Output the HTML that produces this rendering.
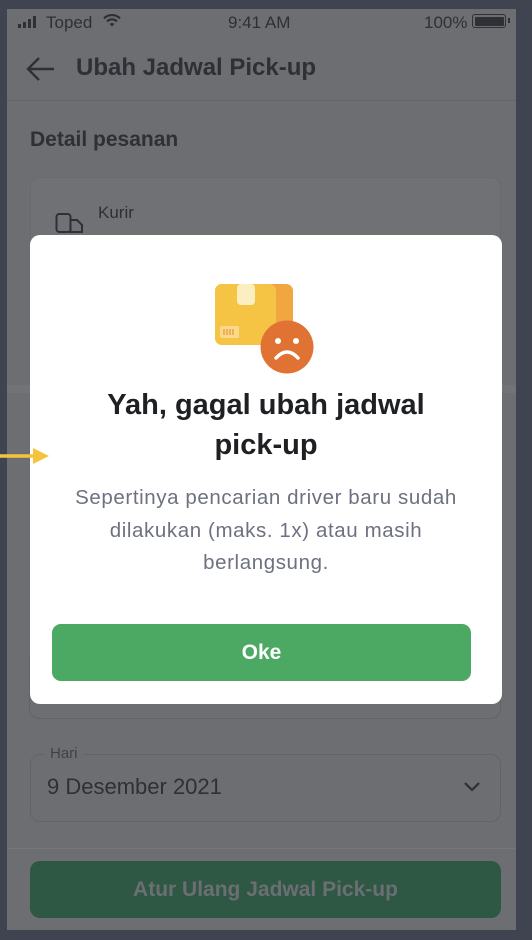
<!DOCTYPE html>
<html><head><meta charset="utf-8"><style>
*{margin:0;padding:0;box-sizing:border-box}
body{width:532px;height:940px;background:#3f4450;position:relative;overflow:hidden;font-family:"Liberation Sans",sans-serif}
.scr{position:absolute;left:7px;top:9px;width:509px;height:921px;background:#6d6e72;overflow:hidden}
.abs{position:absolute}
.t{color:#2e3036}
</style></head><body>
<div class="scr">
  <svg class="abs" style="left:11px;top:7px" width="22" height="12"><rect x="0" y="8" width="3" height="4" fill="#2e3036"/><rect x="5" y="6" width="3" height="6" fill="#2e3036"/><rect x="10" y="3" width="3" height="9" fill="#2e3036"/><rect x="15" y="0" width="3" height="12" fill="#2e3036"/></svg>
  <div class="abs t" style="left:39px;top:4px;font-size:17px">Toped</div>
  <svg class="abs" style="left:96px;top:5px" width="18" height="13" viewBox="0 0 18 13"><path d="M1 4.5A11 11 0 0 1 17 4.5" stroke="#2e3036" stroke-width="2.2" fill="none"/><path d="M4 7.5A7 7 0 0 1 14 7.5" stroke="#2e3036" stroke-width="2.2" fill="none"/><path d="M9 12.5L6.5 10A3.5 3.5 0 0 1 11.5 10Z" fill="#2e3036"/></svg>
  <div class="abs t" style="left:221px;top:4px;font-size:17px">9:41 AM</div>
  <div class="abs t" style="left:417px;top:4px;font-size:17px">100%</div>
  <div class="abs" style="left:465px;top:5px;width:34px;height:14px;border:1.5px solid #2e3036;border-radius:3px;padding:1.5px"><div style="width:100%;height:100%;background:#2e3036;border-radius:1px"></div></div>
  <div class="abs" style="left:501px;top:9px;width:2px;height:5px;background:#2e3036"></div>
  <svg class="abs" style="left:19px;top:47px" width="30" height="26"><path d="M28 13H3M13 2L2 13L13 24" stroke="#2e3036" stroke-width="2.4" fill="none"/></svg>
  <div class="abs t" style="left:69px;top:45px;font-size:24px;font-weight:bold">Ubah Jadwal Pick-up</div>
  <div class="abs" style="left:0;top:91px;width:509px;height:1px;background:#5f646e"></div>
  <div class="abs t" style="left:23px;top:119px;font-size:21px;font-weight:bold">Detail pesanan</div>
  <div class="abs" style="left:23px;top:168px;width:471px;height:220px;border:1px solid #666a72;border-radius:10px;background:#707175"></div>
  <svg class="abs" style="left:48px;top:203px" width="30" height="24"><rect x="1.5" y="2" width="14" height="18" rx="3" stroke="#2e3036" stroke-width="2" fill="none"/><path d="M15.5 8H22L27 13V20H15.5Z" stroke="#2e3036" stroke-width="2" fill="none"/></svg>
  <div class="abs t" style="left:91px;top:194px;font-size:17px">Kurir</div>
  <div class="abs" style="left:0;top:376px;width:509px;height:8px;background:#727377"></div>
  <div class="abs" style="left:22px;top:640px;width:472px;height:70px;border:1px solid #5f636c;border-radius:10px"></div>
  <div class="abs" style="left:23px;top:745px;width:471px;height:68px;border:1px solid #5f636c;border-radius:10px"></div>
  <div class="abs" style="left:38px;top:736px;background:#6d6e72;padding:0 5px;color:#3f424a;font-size:15px">Hari</div>
  <div class="abs t" style="left:40px;top:765px;font-size:22px">9 Desember 2021</div>
  <svg class="abs" style="left:456px;top:772px" width="18" height="12"><path d="M2 2L9 9L16 2" stroke="#2e3036" stroke-width="2.2" fill="none"/></svg>
  <div class="abs" style="left:0;top:839px;width:509px;height:1px;background:#75767a"></div>
  <div class="abs" style="left:23px;top:852px;width:471px;height:57px;background:#2e5744;border-radius:10px;color:#6b6f73;font-size:21px;font-weight:bold;text-align:center;line-height:57px">Atur Ulang Jadwal Pick-up</div>
</div>
<div class="abs" style="left:30px;top:235px;width:472px;height:469px;background:#fff;border-radius:10px"></div>
<svg class="abs" style="left:212px;top:280px" width="112" height="100">
  <rect x="3" y="4" width="78" height="61" rx="7" fill="#f2a640"/>
  <rect x="3" y="4" width="61" height="61" rx="7" fill="#f6c445"/>
  <rect x="25" y="4" width="18" height="21" rx="4" fill="#fbeec0"/>
  <rect x="8" y="46" width="19" height="12" rx="2" fill="#f9d98a"/>
  <path d="M12 49V55M15 49V55M18 49V55M21 49V55" stroke="#ee8f3a" stroke-width="1.2"/>
  <circle cx="75" cy="67" r="26.5" fill="#e07334"/>
  <circle cx="66" cy="61" r="3" fill="#fff"/><circle cx="84" cy="61" r="3" fill="#fff"/>
  <path d="M64 78Q75 66 86 78" stroke="#fff" stroke-width="3.5" fill="none" stroke-linecap="round"/>
</svg>
<div class="abs" style="left:30px;top:385px;width:472px;text-align:center;font-size:29px;font-weight:bold;color:#1f2024;line-height:40px">Yah, gagal ubah jadwal<br>pick-up</div>
<div class="abs" style="left:20px;top:482px;width:492px;text-align:center;font-size:20.5px;letter-spacing:0.6px;color:#6d7180;line-height:32.5px">Sepertinya pencarian driver baru sudah<br>dilakukan (maks. 1x) atau masih<br>berlangsung.</div>
<div class="abs" style="left:52px;top:624px;width:419px;height:57px;background:#4ca964;border-radius:9px;color:#fff;font-size:21px;font-weight:bold;text-align:center;line-height:58px">Oke</div>
<svg class="abs" style="left:0;top:447px" width="50" height="18"><path d="M0 9H36" stroke="#f5c33d" stroke-width="3.5"/><path d="M33 1L49 9L33 17Z" fill="#f5c33d"/></svg>
</body></html>
